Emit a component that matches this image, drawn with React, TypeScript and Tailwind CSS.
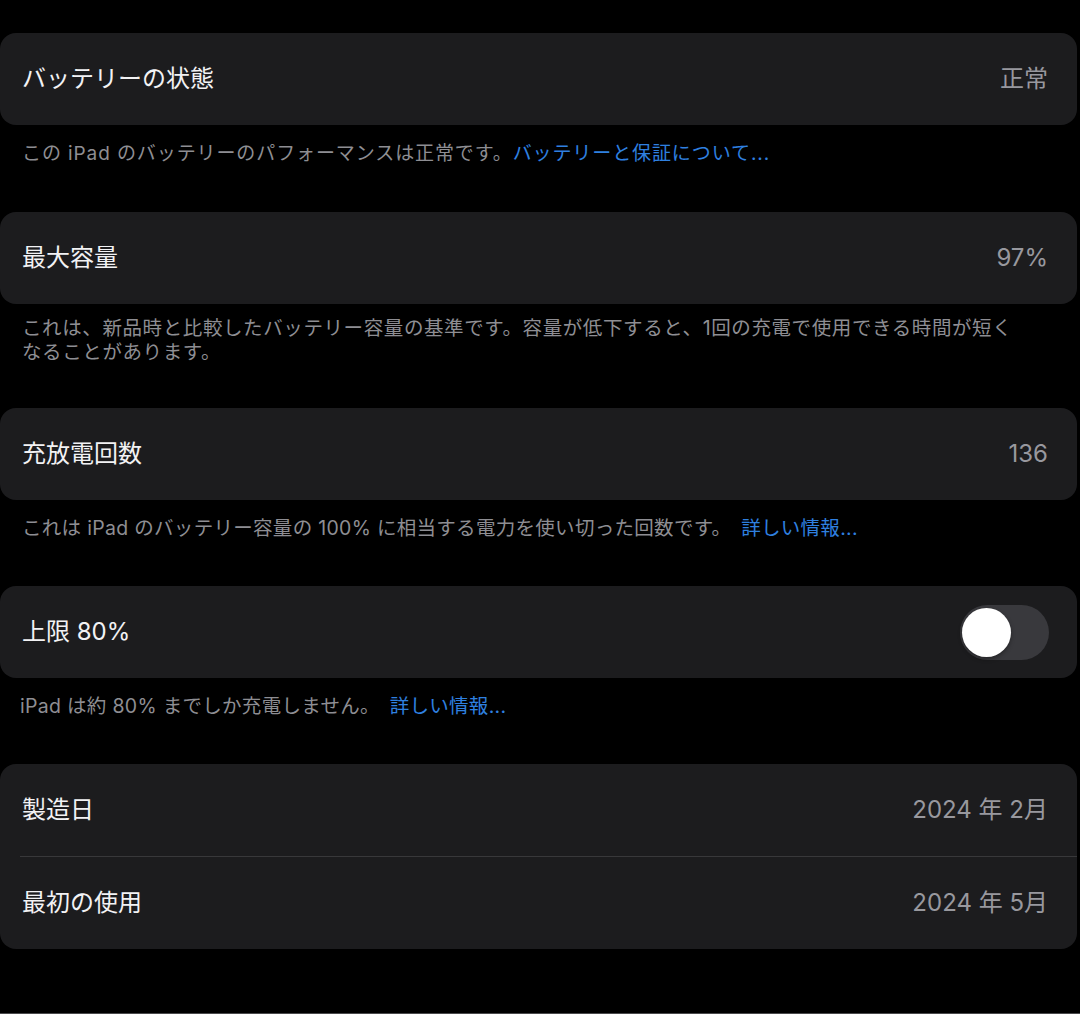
import React from "react";

function Row({ title, value }: { title: string; value?: React.ReactNode }) {
  return (
    <div className="h-[92px] flex items-center justify-between pl-[22px] pr-[29px]">
      <span className="text-[24px] text-[#f2f2f4]">{title}</span>
      {value !== undefined && <span className="text-[24px] text-[#98989e]">{value}</span>}
    </div>
  );
}

function Card({ children }: { children: React.ReactNode }) {
  return <div className="w-[1077px] rounded-[16px] bg-[#1c1c1e] overflow-hidden">{children}</div>;
}

export default function App() {
  return (
    <div className="w-[1080px] h-[1014px] bg-black overflow-hidden font-[Inter,'Noto_Sans_CJK_JP',sans-serif] flex flex-col pt-[33px] border-b border-[#4a4a4c]">
      <Card>
        <Row title="バッテリーの状態" value="正常" />
      </Card>
      <div className="pl-[22px] pt-[17px] pb-[46px] text-[19px] leading-[24px] text-[#8e8e93] whitespace-nowrap tracking-[0.9px]">
        この iPad のバッテリーのパフォーマンスは正常です。<span className="text-[#2f80e0]">バッテリーと保証について...</span>
      </div>

      <Card>
        <Row title="最大容量" value="97%" />
      </Card>
      <div className="pl-[22px] pt-[12px] pb-[44px] text-[19.5px] leading-[24px] text-[#8e8e93] whitespace-nowrap tracking-[0.6px]">
        これは、新品時と比較したバッテリー容量の基準です。容量が低下すると、1回の充電で使用できる時間が短く
        <br />
        なることがあります。
      </div>

      <Card>
        <Row title="充放電回数" value="136" />
      </Card>
      <div className="pl-[22px] pt-[16px] pb-[46px] text-[19.5px] leading-[24px] text-[#8e8e93] whitespace-nowrap tracking-[0.3px]">
        これは iPad のバッテリー容量の 100% に相当する電力を使い切った回数です。 <span className="text-[#2f80e0] ml-[4px]">詳しい情報...</span>
      </div>

      <Card>
        <div className="h-[92px] flex items-center justify-between pl-[22px] pr-[28px]">
          <span className="text-[24px] text-[#f2f2f4]">上限 80%</span>
          <div className="w-[89px] h-[55px] rounded-full bg-[#39393d] flex items-center pl-[2px]">
            <div className="w-[49px] h-[49px] rounded-full bg-white shadow-[0_2px_4px_rgba(0,0,0,0.35)]" />
          </div>
        </div>
      </Card>
      <div className="pl-[20px] pt-[16px] pb-[46px] text-[19.5px] leading-[24px] text-[#8e8e93] whitespace-nowrap tracking-[0.3px]">
        iPad は約 80% までしか充電しません。 <span className="text-[#2f80e0] ml-[4px]">詳しい情報...</span>
      </div>

      <Card>
        <Row title="製造日" value="2024 年 2月" />
        <div className="ml-[20px] h-px bg-[#38383a]" />
        <Row title="最初の使用" value="2024 年 5月" />
      </Card>
    </div>
  );
}
